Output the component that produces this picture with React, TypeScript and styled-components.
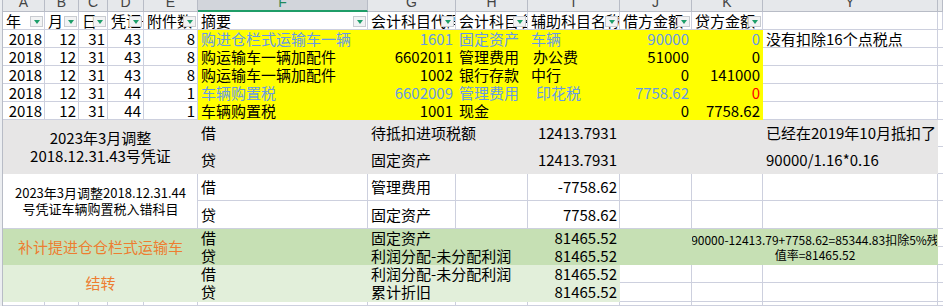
import React from "react";
import styled, { createGlobalStyle } from "styled-components";

const GRID = "#cdd0de";
const HEAD_LINE = "#b8bcc6";
const YELLOW = "#ffff00";
const GRAY = "#e7e6e6";
const GREEN = "#c6e0b4";
const PALE = "#e2efda";
const BLUE = "#6699e6";
const ORANGE = "#ed7d31";

const COLUMN_WIDTHS = [3, 42, 34, 29, 36, 54, 170, 88, 72, 92, 72, 71, 175, 5];
const ROW_HEIGHTS = [12, 18, 18, 18, 18, 18, 18, 27, 27, 27, 28, 18, 18, 18, 19, 4];

const GlobalStyle = createGlobalStyle`
  html, body {
    margin: 0;
    background: #fff;
    overflow: hidden;
  }
`;

const Sheet = styled.div`
  display: grid;
  grid-template-columns: ${COLUMN_WIDTHS.map((w) => `${w}px`).join(" ")};
  grid-template-rows: ${ROW_HEIGHTS.map((h) => `${h}px`).join(" ")};
  font-family: "Noto Sans CJK SC", "Liberation Sans", sans-serif;
  font-size: 15px;
  color: #000;
`;

const Stub = styled.div`
  grid-column: 1;
  grid-row: 1 / -1;
  background: #eceef1;
  border-right: 1px solid ${HEAD_LINE};
`;

const ColHead = styled.div<{ $active?: boolean }>`
  box-sizing: border-box;
  display: flex;
  justify-content: center;
  align-items: flex-start;
  overflow: hidden;
  background: ${(p) => (p.$active ? "#d2d5db" : "#e6e8eb")};
  border-right: 1px solid ${HEAD_LINE};
  border-bottom: ${(p) => (p.$active ? "2px solid #1f9d68" : `1px solid ${HEAD_LINE}`)};
  color: ${(p) => (p.$active ? "#1f8a5c" : "#444")};
  font-family: "Liberation Sans", sans-serif;
  font-size: 14px;
`;

const Letter = styled.span`
  margin-top: -5px;
  line-height: 14px;
`;

const FieldCell = styled.div`
  box-sizing: border-box;
  position: relative;
  overflow: hidden;
  white-space: nowrap;
  padding-left: 3px;
  line-height: 17px;
  background: #fff;
  border-right: 1px solid ${GRID};
  border-bottom: 1px solid ${GRID};
`;

const FilterButton = styled.span`
  position: absolute;
  right: 1px;
  top: 4px;
  width: 13px;
  height: 11px;
  box-sizing: border-box;
  background: #f2f3f4;
  border: 1px solid #c9ccd1;
  display: flex;
  align-items: center;
  justify-content: center;

  &::after {
    content: "";
    border-left: 3px solid transparent;
    border-right: 3px solid transparent;
    border-top: 4px solid #1e9e6a;
  }
`;

type Align = "left" | "right" | "center";

const Cell = styled.div<{
  $bg?: string;
  $color?: string;
  $align?: Align;
  $span?: number;
  $rows?: number;
  $size?: number;
  $pad?: number;
}>`
  grid-column: span ${(p) => p.$span ?? 1};
  grid-row: span ${(p) => p.$rows ?? 1};
  box-sizing: border-box;
  display: flex;
  align-items: center;
  justify-content: ${(p) =>
    p.$align === "right" ? "flex-end" : p.$align === "center" ? "center" : "flex-start"};
  text-align: ${(p) => p.$align ?? "left"};
  padding: 0 2px 0 ${(p) => p.$pad ?? 3}px;
  background: ${(p) => p.$bg ?? "#fff"};
  border-right: 1px solid ${(p) => (p.$bg ? "transparent" : GRID)};
  border-bottom: 1px solid ${(p) => (p.$bg ? "transparent" : GRID)};
  color: ${(p) => p.$color ?? "#000"};
  font-size: ${(p) => p.$size ?? 15}px;
  line-height: ${(p) => ((p.$size ?? 15) >= 15 ? 18 : (p.$size ?? 15) + 3)}px;
  white-space: nowrap;
  overflow: hidden;
`;

type Spec = {
  t?: React.ReactNode;
  span?: number;
  rows?: number;
  bg?: string;
  color?: string;
  align?: Align;
  size?: number;
  pad?: number;
};

const LETTERS = ["A", "B", "C", "D", "E", "F", "G", "H", "I", "J", "K", "Y", ""];
const FIELDS = [
  "年",
  "月",
  "日",
  "凭证号",
  "附件数",
  "摘要",
  "会计科目代码",
  "会计科目名称",
  "辅助科目名称",
  "借方金额",
  "贷方金额",
];

type Entry = {
  no: number;
  att: number;
  memo: string;
  code: string;
  name: string;
  aux: string;
  auxPad?: number;
  debit: string;
  credit: string;
  color?: string;
  creditColor?: string;
  note?: string;
};

const entries: Entry[] = [
  { no: 43, att: 8, memo: "购进仓栏式运输车一辆", code: "1601", name: "固定资产", aux: "车辆", debit: "90000", credit: "0", color: BLUE, note: "没有扣除16个点税点" },
  { no: 43, att: 8, memo: "购运输车一辆加配件", code: "6602011", name: "管理费用", aux: "办公费", auxPad: 5, debit: "51000", credit: "0" },
  { no: 43, att: 8, memo: "购运输车一辆加配件", code: "1002", name: "银行存款", aux: "中行", debit: "0", credit: "141000" },
  { no: 44, att: 1, memo: "车辆购置税", code: "6602009", name: "管理费用", aux: "印花税", auxPad: 8, debit: "7758.62", credit: "0", color: BLUE, creditColor: "#ff0000" },
  { no: 44, att: 1, memo: "车辆购置税", code: "1001", name: "现金", aux: "", debit: "0", credit: "7758.62" },
];

function entryRow(e: Entry): Spec[] {
  const y = { bg: YELLOW, color: e.color };
  return [
    { t: "2018", align: "right" },
    { t: "12", align: "right" },
    { t: "31", align: "right" },
    { t: String(e.no), align: "right" },
    { t: String(e.att), align: "right" },
    { t: e.memo, ...y },
    { t: e.code, align: "right", ...y },
    { t: e.name, ...y },
    { t: e.aux, pad: e.auxPad, ...y },
    { t: e.debit, align: "right", ...y },
    { t: e.credit, align: "right", ...y, color: e.creditColor ?? e.color },
    { t: e.note },
    {},
  ];
}

const blocks: Spec[][] = [
  [
    { t: <>2023年3月调整<br />2018.12.31.43号凭证</>, span: 5, rows: 2, bg: GRAY, align: "center" },
    { t: "借", bg: GRAY },
    { t: "待抵扣进项税额", span: 2, bg: GRAY },
    { t: "12413.7931", bg: GRAY, align: "right" },
    { bg: GRAY },
    { bg: GRAY },
    { t: "已经在2019年10月抵扣了", bg: GRAY },
    {},
  ],
  [
    { t: "贷", bg: GRAY },
    { t: "固定资产", span: 2, bg: GRAY },
    { t: "12413.7931", bg: GRAY, align: "right" },
    { bg: GRAY },
    { bg: GRAY },
    { t: "90000/1.16*0.16", bg: GRAY },
    {},
  ],
  [
    { t: <>2023年3月调整2018.12.31.44<br />号凭证车辆购置税入错科目</>, span: 5, rows: 2, align: "center", size: 13 },
    { t: "借" },
    { t: "管理费用" },
    {},
    { t: "-7758.62", align: "right" },
    {},
    {},
    {},
    {},
  ],
  [
    { t: "贷" },
    { t: "固定资产" },
    {},
    { t: "7758.62", align: "right" },
    {},
    {},
    {},
    {},
  ],
  [
    { t: "补计提进仓仓栏式运输车", span: 5, rows: 2, bg: GREEN, color: ORANGE, align: "center" },
    { t: "借", bg: GREEN },
    { t: "固定资产", span: 2, bg: GREEN },
    { t: "81465.52", bg: GREEN, align: "right" },
    { bg: GREEN },
    { t: <>90000-12413.79+7758.62=85344.83扣除5%残<br />值率=81465.52</>, span: 2, rows: 2, bg: GREEN, align: "center", size: 12 },
    {},
  ],
  [
    { t: "贷", bg: GREEN },
    { t: "利润分配-未分配利润", span: 2, bg: GREEN },
    { t: "81465.52", bg: GREEN, align: "right" },
    { bg: GREEN },
    {},
  ],
  [
    { t: "结转", span: 5, rows: 2, bg: PALE, color: ORANGE, align: "center" },
    { t: "借", bg: PALE },
    { t: "利润分配-未分配利润", span: 2, bg: PALE },
    { t: "81465.52", bg: PALE, align: "right" },
    {},
    {},
    {},
    {},
  ],
  [
    { t: "贷", bg: PALE },
    { t: "累计折旧", span: 2, bg: PALE },
    { t: "81465.52", bg: PALE, align: "right" },
    {},
    {},
    {},
    {},
  ],
  Array.from({ length: 13 }, () => ({})),
];

export default function App() {
  const rows = [...entries.map(entryRow), ...blocks];

  return (
    <>
      <GlobalStyle />
      <Sheet>
        <Stub />
        {LETTERS.map((letter, i) => (
          <ColHead key={`h${i}`} $active={letter === "F"}>
            <Letter>{letter}</Letter>
          </ColHead>
        ))}
        {LETTERS.map((_, i) => (
          <FieldCell key={`f${i}`}>
            {FIELDS[i]}
            {i < FIELDS.length && <FilterButton />}
          </FieldCell>
        ))}
        {rows.map((row, r) =>
          row.map((c, i) => (
            <Cell
              key={`${r}-${i}`}
              $bg={c.bg}
              $color={c.color}
              $align={c.align}
              $span={c.span}
              $rows={c.rows}
              $size={c.size}
              $pad={c.pad}
            >
              {c.t}
            </Cell>
          ))
        )}
      </Sheet>
    </>
  );
}
